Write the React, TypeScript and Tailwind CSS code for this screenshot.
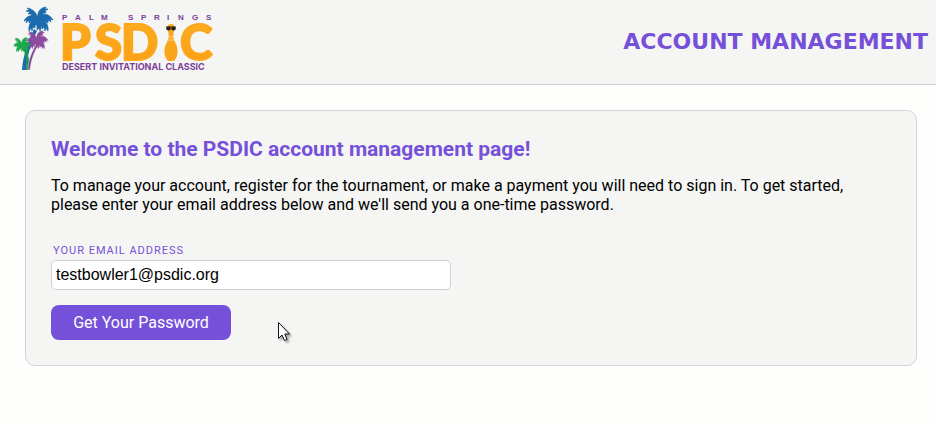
import { useState } from "react";

type PalmProps = { x: number; y: number; scale: number; color: string };

/* Palm crown, drawn around the point where the fronds meet the trunk. */
function PalmCrown({ x, y, scale, color }: PalmProps) {
  return (
    <g
      transform={`translate(${x} ${y}) scale(${scale})`}
      fill={color}
      stroke={color}
      strokeWidth="0.7"
      strokeLinejoin="round"
    >
      <path d="M0 1 C-1 -4 -4 -9 -11 -10 L-9 -8 L-12 -7 L-8 -6 L-10 -4 L-6 -4 L-7 -2 Z" />
      <path d="M0 1 C-1 -5 1 -10 8 -11 L7 -9 L10 -9 L7 -7 L8 -5 L5 -5 L5 -3 Z" />
      <path d="M-1 1 C-5 -4 -11 -3 -14 3 L-11 2 L-12 5 L-9 2 L-9 5 L-6 3 L-5 5 Z" />
      <path d="M0 1 C4 -6 11 -5 15 2 L12 1 L13 4 L10 2 L10 5 L7 3 L6 5 Z" />
      <path d="M0 0 C-6 1 -10 6 -9 13 L-7 10 L-6 13 L-5 9 L-3 10 L-3 7 L-1 7 Z" />
      <path d="M0 0 C6 0 11 6 10 13 L8 10 L7 13 L6 9 L4 11 L4 7 L2 8 Z" />
      <path d="M-2 0 L2 0 C4 4 4 9 2 13 L1 10 L-1 12 L-1 8 Z" />
    </g>
  );
}

function Logo() {
  return (
    <svg
      className="h-[72px] w-[202px] shrink-0"
      viewBox="13 6 202 72"
      role="img"
      aria-label="Palm Springs PSDIC Desert Invitational Classic"
    >
      <defs>
        <linearGradient id="sun" x1="0" y1="0" x2="0" y2="1">
          <stop offset="0" stopColor="#fdb022" />
          <stop offset="1" stopColor="#fb9c15" />
        </linearGradient>
      </defs>
      <path d="M34 29 C28 43 23 55 22 70 L26 70 C27 56 31 43 37 31 Z" fill="#1b6cae" />
      <path d="M21 44 C25 51 27 60 26 70 L29 70 C30 59 28 50 22 43 Z" fill="#149a55" />
      <path d="M37 43 C32 51 28 60 28 70 L30 70 C31 60 34 52 39 44 Z" fill="#82479c" stroke="#f5f5f5" strokeWidth="0.4" />
      <PalmCrown x={38} y={18} scale={1} color="#1b6cae" />
      <PalmCrown x={22} y={44} scale={0.6} color="#1da64a" />
      <PalmCrown x={37} y={39} scale={0.74} color="#8c4ba0" />

      <g fill="#7b3f98" fontWeight="700">
        <text
          fontFamily="'Liberation Sans', Arial, sans-serif"
          fontSize="8"
          y="20"
          x="62 75 89 101 128 141 154 167 178 192 206"
        >
          PALMSPRINGS
        </text>
        <text fontFamily="Inter, sans-serif" fontSize="9" x="62" y="70">
          DESERT INVITATIONAL CLASSIC
        </text>
      </g>
      <g
        fontFamily="Lato, 'Open Sans', sans-serif"
        fontWeight="900"
        fontSize="49"
        fill="url(#sun)"
        stroke="#fda71b"
        strokeWidth="2"
      >
        <text x="60 95 121 180" y="60">PSDC</text>
      </g>
      <path
        d="M171 24 C167 24 167 28 168 31 C169 34 169 38 167 42 C163 49 164 57 168 61 L174 61 C178 57 179 49 175 42 C173 38 173 34 174 31 C175 28 175 24 171 24 Z"
        fill="#fba51c"
      />
      <path d="M168 37 H174 M167 40 H175" stroke="#f8e6b8" strokeWidth="0.8" />
      <path d="M166 27 H176" stroke="#3a2a14" strokeWidth="1" />
      <ellipse cx="168.5" cy="28.5" rx="2.3" ry="2" fill="#2b2018" />
      <ellipse cx="173.5" cy="28.5" rx="2.3" ry="2" fill="#2b2018" />
    </svg>
  );
}

function Pointer() {
  return (
    <svg
      className="pointer-events-none absolute left-[226px] top-4 h-6 w-4 drop-shadow-[2px_2px_1px_rgba(0,0,0,0.35)]"
      viewBox="0 0 16 24"
      aria-hidden="true"
    >
      <path
        d="M1.5 1.5 V17.5 L5 14 L7.5 19.5 L10 18.5 L7.8 13 H12.5 Z"
        fill="#fff"
        stroke="#111"
        strokeWidth="1"
      />
    </svg>
  );
}

export default function App() {
  const [email, setEmail] = useState("testbowler1@psdic.org");

  return (
    <div className="min-h-screen bg-[#fefefd] font-[Roboto,sans-serif] text-base text-black">
      <header className="flex items-center justify-between border-b border-[#d3d3d5] bg-[#f5f5f4] py-1.5 pl-[13px] pr-2">
        <Logo />
        <h1 className="font-['DejaVu_Sans',sans-serif] text-[22px] leading-6 font-bold text-[#7550d8]">
          ACCOUNT MANAGEMENT
        </h1>
      </header>

      <main className="py-[25px] pl-[25px] pr-[19px]">
        <section className="rounded-[10px] border border-[#d3d3d8] bg-[#f5f5f4] p-[25px]">
          <h2 className="text-[21px] leading-[26px] font-bold text-[#7550d8]">
            Welcome to the PSDIC account management page!
          </h2>
          <p className="mt-3.5 max-w-[820px] leading-[19px]">
            To manage your account, register for the tournament, or make a payment you will need to
            sign in. To get started, please enter your email address below and we'll send you a
            one-time password.
          </p>
          <form className="mt-7" onSubmit={(e) => e.preventDefault()}>
            <label
              htmlFor="email"
              className="block pl-0.5 text-[11px] leading-[18px] tracking-[1px] text-[#7550d8]"
            >
              YOUR EMAIL ADDRESS
            </label>
            <input
              id="email"
              type="email"
              value={email}
              onChange={(e) => setEmail(e.target.value)}
              className="block h-[30px] w-full max-w-[400px] rounded-[5px] border border-[#d0d0d4] bg-white px-1 font-['Liberation_Sans',Arial,sans-serif] text-base"
            />
            <div className="relative mt-[15px]">
              <button
                type="submit"
                className="block h-[35px] w-[180px] rounded-lg bg-[#7550d8] text-base text-white"
              >
                Get Your Password
              </button>
              <Pointer />
            </div>
          </form>
        </section>
      </main>
    </div>
  );
}
